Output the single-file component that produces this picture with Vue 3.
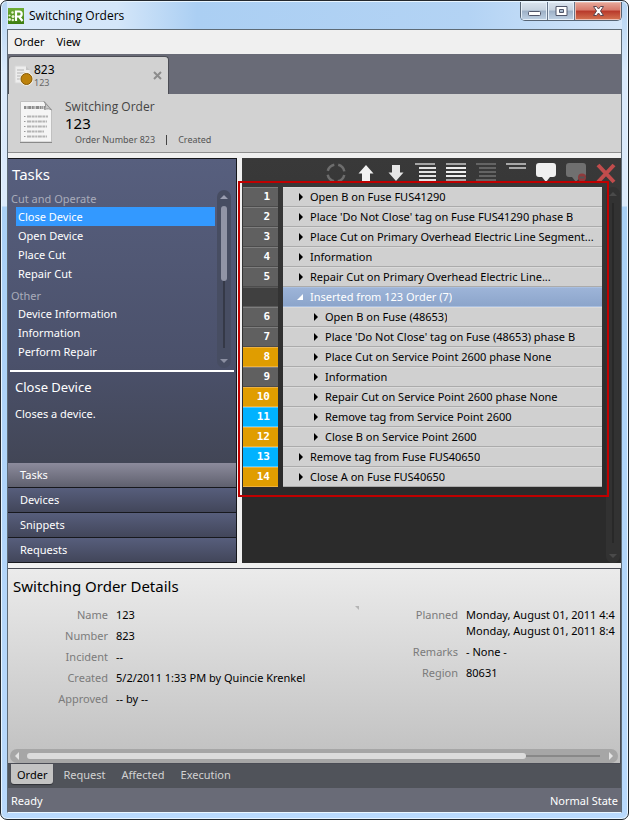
<script setup>
import { ref } from 'vue'

const taskGroups = [
  { name: 'Cut and Operate', items: ['Close Device', 'Open Device', 'Place Cut', 'Repair Cut'] },
  { name: 'Other', items: ['Device Information', 'Information', 'Perform Repair'] },
]
const selectedTask = ref('Close Device')

const sections = ['Tasks', 'Devices', 'Snippets', 'Requests']
const activeSection = ref('Tasks')

const steps = [
  { n: 1, text: 'Open B on Fuse FUS41290' },
  { n: 2, text: "Place 'Do Not Close' tag on Fuse FUS41290 phase B" },
  { n: 3, text: 'Place Cut on Primary Overhead Electric Line Segment...' },
  { n: 4, text: 'Information' },
  { n: 5, text: 'Repair Cut on Primary Overhead Electric Line...' },
  { n: '', text: 'Inserted from 123 Order (7)', group: true },
  { n: 6, text: 'Open B on Fuse (48653)', nested: true },
  { n: 7, text: "Place 'Do Not Close' tag on Fuse (48653) phase B", nested: true },
  { n: 8, text: 'Place Cut on Service Point 2600 phase None', nested: true, tone: 'amber' },
  { n: 9, text: 'Information', nested: true },
  { n: 10, text: 'Repair Cut on Service Point 2600 phase None', nested: true, tone: 'amber' },
  { n: 11, text: 'Remove tag from Service Point 2600', nested: true, tone: 'blue' },
  { n: 12, text: 'Close B on Service Point 2600', nested: true, tone: 'amber' },
  { n: 13, text: 'Remove tag from Fuse FUS40650', tone: 'blue' },
  { n: 14, text: 'Close A on Fuse FUS40650', tone: 'amber' },
]

const detailColumns = [
  [
    { label: 'Name', lines: ['123'] },
    { label: 'Number', lines: ['823'] },
    { label: 'Incident', lines: ['--'] },
    { label: 'Created', lines: ['5/2/2011 1:33 PM by Quincie Krenkel'] },
    { label: 'Approved', lines: ['-- by --'] },
  ],
  [
    { label: 'Planned', lines: ['Monday, August 01, 2011 4:4', 'Monday, August 01, 2011 8:4'] },
    { label: 'Remarks', lines: ['- None -'] },
    { label: 'Region', lines: ['80631'] },
  ],
]

const bottomTabs = ['Order', 'Request', 'Affected', 'Execution']
const activeTab = ref('Order')
</script>

<template>
  <div class="window">
    <header class="titlebar">
      <svg class="app-icon" viewBox="0 0 16 16" aria-hidden="true">
        <defs>
          <linearGradient id="appg" x1="0" y1="0" x2="0" y2="1">
            <stop offset="0" stop-color="#6fae35" /><stop offset="1" stop-color="#3d7d10" />
          </linearGradient>
        </defs>
        <rect width="16" height="16" fill="url(#appg)" />
        <path d="M8 13V3.5h3.2a2.4 2.4 0 0 1 0 5H8.5M11 8.5l3.500 4.5" fill="none" stroke="#fff" stroke-width="2.200" />
        <g fill="#e6f5cf">
          <circle cx="1.500" cy="7.500" r="1.100" /><circle cx="4.500" cy="4.500" r="1.200" /><circle cx="5" cy="8.4" r="1.500" />
          <circle cx="1.6" cy="11.5" r="1.400" /><circle cx="4.800" cy="12" r="1.300" />
        </g>
      </svg>
      <h1>Switching Orders</h1>
      <div class="caption-buttons">
        <button type="button" class="cap" aria-label="Minimize">
          <svg width="13" height="12" viewBox="0 0 13 12"><rect x="0.500" y="6.500" width="12" height="4" rx="1" fill="#fff" stroke="#50566a" /></svg>
        </button>
        <button type="button" class="cap" aria-label="Maximize">
          <svg width="13" height="12" viewBox="0 0 13 12"><path fill-rule="evenodd" d="M1 1.500h11v9H1zM4.500 4.500v3h4v-3z" fill="#fff" stroke="#50566a" /></svg>
        </button>
        <button type="button" class="cap cap-close" aria-label="Close">
          <svg width="13" height="12" viewBox="0 0 13 12"><path d="M1.500 1.500h3l2 2.500 2-2.500h3L8.500 6l3 4.500h-3l-2-2.500-2 2.500h-3l3-4.500z" fill="#fff" stroke="#5a4650" /></svg>
        </button>
      </div>
    </header>

    <div class="client">
      <nav class="menubar">
        <button type="button">Order</button>
        <button type="button">View</button>
      </nav>

      <div class="doc-tabs">
        <div class="doc-tab">
          <svg class="doc-icon" width="20" height="22" viewBox="0 0 20 22" aria-hidden="true">
            <path d="M1 1h11l4 4v13H1z" fill="#ededed" stroke="#d8d8d8" />
            <path d="M3 5h7M3 8h8M3 11h5M3 14h4" stroke="#b5b5b5" />
            <path d="M12 1v4h4z" fill="#c6c6c6" />
            <circle cx="12.500" cy="14" r="6.800" fill="#f8f1e0" />
            <circle cx="12.500" cy="14" r="5.500" fill="#bd820b" stroke="#865a08" />
          </svg>
          <span class="doc-names"><span>823</span><small>123</small></span>
          <button type="button" class="doc-close" aria-label="Close tab">
            <svg width="9" height="9" viewBox="0 0 9 9"><path d="M1 1l7 7M8 1L1 8" stroke="#8c8c8c" stroke-width="2" /></svg>
          </button>
        </div>
      </div>

      <section class="order-head">
        <svg width="34" height="44" viewBox="0 0 34 44" aria-hidden="true">
          <path d="M1.500 1.500h24l7 8v32.500h-31z" fill="#f5f5f5" stroke="#c0c0c0" />
          <path d="M1 42.500h32" stroke="#898989" />
          <path d="M5 7.500h21" stroke="#8a8a8a" stroke-width="3" stroke-dasharray="2 .6 1 .6 3 .6" />
          <path d="M25 1.500c2 2 2 5 .5 8 3-1 5-1 7 .5z" fill="#c8c8c8" stroke="#929292" />
          <path d="M8 16.500h21M8 21.500h20M8 26.500h20M8 31.500h17M8 36.500h20" stroke="#b4b4b4" stroke-width="2" stroke-dasharray="4 .6 3 .6 2 .6" />
          <path d="M5 16.500h1.500M5 21.500h1.500M5 26.500h1.500M5 31.500h1.500M5 36.500h1.500" stroke="#999" />
        </svg>
        <div class="order-text">
          <p class="kind">Switching Order</p>
          <h2>123</h2>
          <p class="meta"><span>Order Number 823</span><span class="bar"></span><span>Created</span></p>
        </div>
      </section>

      <main class="work">
        <aside class="side">
          <h2>Tasks</h2>
          <div class="task-area">
            <div class="task-list">
              <template v-for="g in taskGroups" :key="g.name">
                <h3>{{ g.name }}</h3>
                <button
                  v-for="t in g.items"
                  :key="t"
                  type="button"
                  :class="{ selected: t === selectedTask }"
                  @click="selectedTask = t"
                >{{ t }}</button>
              </template>
            </div>
            <div class="vscroll" aria-hidden="true">
              <svg width="8" height="4" viewBox="0 0 8 4"><path d="M0 4l4-4 4 4z" fill="#9b9eb0" /></svg>
              <div class="vtrack"><div class="vthumb"></div></div>
              <svg width="8" height="4" viewBox="0 0 8 4"><path d="M0 0l4 4 4-4z" fill="#8b8fa1" /></svg>
            </div>
          </div>
          <div class="task-info">
            <h3>Close Device</h3>
            <p>Closes a device.</p>
          </div>
          <nav class="sections">
            <button
              v-for="s in sections"
              :key="s"
              type="button"
              :class="{ active: s === activeSection }"
              @click="activeSection = s"
            >{{ s }}</button>
          </nav>
        </aside>

        <section class="steps">
          <div class="toolbar">
            <button type="button" aria-label="Refresh">
              <svg width="22" height="22" viewBox="0 0 22 22"><circle cx="11" cy="11" r="8.500" fill="none" stroke="#6d6d6d" stroke-width="2.500" stroke-dasharray="9.350 4" stroke-dashoffset="-2" /></svg>
            </button>
            <button type="button" aria-label="Move up">
              <svg width="22" height="22" viewBox="0 0 22 22"><path d="M11 3l7.500 8.500H15V19H7v-7.500H3.500z" fill="#f2f2f2" /></svg>
            </button>
            <button type="button" aria-label="Move down">
              <svg width="22" height="22" viewBox="0 0 22 22"><path d="M11 19l7.500-8.500H15V3H7v7.500H3.500z" fill="#e6e6e6" /></svg>
            </button>
            <button type="button" aria-label="Insert before">
              <svg width="22" height="22" viewBox="0 0 22 22"><path d="M0 2h20" stroke="#a5a5a5" stroke-width="2" /><path d="M4 6h17M4 10h17M4 14h17M4 18h17" stroke="#e4e4e4" stroke-width="2" /></svg>
            </button>
            <button type="button" aria-label="Show all">
              <svg width="22" height="22" viewBox="0 0 22 22"><path d="M1 2h20M1 18h20" stroke="#a5a5a5" stroke-width="2" /><path d="M1 6h20M1 10h20M1 14h20" stroke="#eee" stroke-width="2" /></svg>
            </button>
            <button type="button" aria-label="Indent">
              <svg width="22" height="22" viewBox="0 0 22 22"><path d="M1 2h20M4 6h17M4 10h17M4 14h17M1 18h20" stroke="#646464" stroke-width="2" /></svg>
            </button>
            <button type="button" aria-label="Collapse">
              <svg width="22" height="22" viewBox="0 0 22 22"><path d="M1 2h20M4 6h17" stroke="#a8a8a8" stroke-width="2" /></svg>
            </button>
            <button type="button" aria-label="Add comment">
              <svg width="22" height="22" viewBox="0 0 22 22"><path d="M4 1h14q3 0 3 3v8q0 3-3 3h-3l-4 5-4-5H4q-3 0-3-3V4q0-3 3-3z" fill="#f0f0f0" /></svg>
            </button>
            <button type="button" aria-label="Remove comment">
              <svg width="22" height="22" viewBox="0 0 22 22"><path d="M4 1h14q3 0 3 3v8q0 3-3 3h-3l-4 5-4-5H4q-3 0-3-3V4q0-3 3-3z" fill="#707070" /><circle cx="17" cy="15.500" r="4" fill="#8f3a3c" /><path d="M14.500 15.500h5" stroke="#555" stroke-width="2" /></svg>
            </button>
            <button type="button" aria-label="Delete">
              <svg width="22" height="22" viewBox="0 0 22 22"><path d="M3 3l16 17M19 3L3 20" stroke="#c14c4c" stroke-width="4" /></svg>
            </button>
          </div>

          <div class="step-body">
            <div class="step-column">
              <ol class="step-list">
                <li v-for="(s, i) in steps" :key="i" :class="[s.tone, { group: s.group, nested: s.nested }]">
                  <span class="num">{{ s.n }}</span>
                  <span class="step">
                    <svg v-if="s.group" width="6" height="6" viewBox="0 0 6 6" aria-hidden="true"><path d="M6 0v6H0z" fill="#fff" /></svg>
                    <svg v-else width="6" height="8" viewBox="0 0 6 8" aria-hidden="true"><path d="M1 0l4 4-4 4z" fill="#000" /></svg>
                    <span class="step-text">{{ s.text }}</span>
                  </span>
                </li>
              </ol>
              <div class="highlight"></div>
            </div>
            <div class="vscroll dark" aria-hidden="true">
              <svg width="8" height="4" viewBox="0 0 8 4"><path d="M0 4l4-4 4 4z" fill="#4a4a4a" /></svg>
              <div class="vtrack"></div>
              <svg width="8" height="4" viewBox="0 0 8 4"><path d="M0 0l4 4 4-4z" fill="#4a4a4a" /></svg>
            </div>
          </div>
        </section>
      </main>

      <section class="details">
        <h2>Switching Order Details</h2>
        <div class="detail-columns">
          <dl v-for="(col, c) in detailColumns" :key="c">
            <div v-for="f in col" :key="f.label" class="field">
              <dt>{{ f.label }}</dt>
              <dd><span v-for="l in f.lines" :key="l">{{ l }}</span></dd>
            </div>
          </dl>
          <svg class="corner" width="4" height="4" viewBox="0 0 4 4" aria-hidden="true"><path d="M0 0h4v4z" fill="#b4b4b4" /></svg>
        </div>
        <div class="hscroll" aria-hidden="true">
          <svg width="4" height="8" viewBox="0 0 4 8"><path d="M4 0L0 4l4 4z" fill="#e4e4e4" /></svg>
          <div class="htrack"><div class="hthumb"></div></div>
          <svg width="4" height="8" viewBox="0 0 4 8"><path d="M0 0l4 4-4 4z" fill="#e4e4e4" /></svg>
        </div>
      </section>

      <nav class="bottom-tabs">
        <button
          v-for="t in bottomTabs"
          :key="t"
          type="button"
          :class="{ active: t === activeTab }"
          @click="activeTab = t"
        >{{ t }}</button>
      </nav>

      <footer class="status"><span>Ready</span><span>Normal State</span></footer>
    </div>
  </div>
</template>

<style>
body {
  margin: 0;
  background: #fff;
}
</style>

<style scoped>
* {
  box-sizing: border-box;
}
h1, h2, h3, p, ol, dl, dd {
  margin: 0;
  padding: 0;
  font-weight: 400;
}
button {
  margin: 0;
  padding: 0;
  border: 0;
  background: none;
  font: inherit;
  color: inherit;
  text-align: left;
}
svg {
  display: block;
  flex: none;
}
.window {
  display: flex;
  flex-direction: column;
  min-height: 100vh;
  padding: 0 6px 6px;
  border: 1px solid #23282e;
  border-radius: 7px;
  background: linear-gradient(180deg, #b4d3f2 0, #d9e9fb 70px, #dceafa 205px, #a9d0f5 206px, #b9d9fc 100%);
  box-shadow: inset 0 0 0 1px #e8f5ff;
  font-family: "Noto Sans", "Open Sans", sans-serif;
  font-size: 11px;
  line-height: 16px;
  color: #000;
}
.titlebar {
  display: flex;
  align-items: center;
  height: 27px;
  gap: 5px;
  padding-left: 1px;
  background: linear-gradient(90deg, #d9e9fa 0, #d4e6f9 110px, #abcff3 190px, #b3d3f4 75%, #d4e6fa 100%);
  margin-top: 1px;
}
.app-icon {
  width: 16px;
  height: 16px;
}
.titlebar h1 {
  flex: 1;
  font-family: "Open Sans", sans-serif;
  font-size: 12px;
}
.caption-buttons {
  display: flex;
  align-self: flex-start;
  height: 19px;
  border: 1px solid #566474;
  border-top: 0;
  border-radius: 0 0 5px 5px;
  overflow: hidden;
}
.cap {
  display: flex;
  justify-content: center;
  align-items: center;
  width: 27px;
  border-right: 1px solid #66758a;
  background: linear-gradient(#dbe4ee 0, #c6d2df 45%, #9db0c6 50%, #c0d2e5 100%);
  box-shadow: inset 0 0 0 1px #e6eff8;
}
.cap-close {
  width: 46px;
  border-right: 0;
  background: linear-gradient(#e7aa9c 0, #d7796a 45%, #b8382a 50%, #d57552 100%);
  box-shadow: inset 0 0 0 1px #edbcaf;
}
.client {
  display: flex;
  flex-direction: column;
  flex: 1;
  min-width: 0;
  border: 1px solid #5e6b76;
  border-bottom-color: #e8f5ff;
  background: #f0f0f0;
}
.menubar {
  display: flex;
  gap: 12px;
  height: 24px;
  padding: 0 6px;
}
.doc-tabs {
  display: flex;
  align-items: flex-end;
  height: 40px;
  background: #696b77;
}
.doc-tab {
  display: flex;
  align-items: center;
  width: 161px;
  height: 38px;
  padding: 0 6px 0 5px;
  border: 1px solid #4c4d55;
  border-bottom: 0;
  border-radius: 4px 4px 0 0;
  background: #d2d2d2;
}
.doc-names {
  display: flex;
  flex: 1;
  flex-direction: column;
  font-size: 12px;
  line-height: 14px;
}
.doc-names small {
  font-size: 9px;
  line-height: 11px;
  color: #666;
}
.order-head {
  display: flex;
  gap: 12px;
  height: 59px;
  padding: 6px 11px 0;
  border-bottom: 1px solid #8e8e8e;
  background: #d2d2d2;
}
.order-text .kind {
  font-family: "Open Sans", sans-serif;
  font-size: 12px;
  line-height: 14px;
  color: #444;
}
.order-text h2 {
  font-size: 15px;
  line-height: 19px;
}
.order-text .meta {
  display: flex;
  align-items: center;
  gap: 11px;
  padding-left: 10px;
  font-size: 9px;
  line-height: 14px;
  color: #555;
}
.meta .bar {
  width: 1px;
  height: 10px;
  background: #444;
}
.work {
  display: flex;
  flex: 1;
  gap: 5px;
  padding: 5px 0;
}
.side {
  display: flex;
  flex-direction: column;
  width: 229px;
  border: 1px solid #15161a;
  border-left: 0;
  border-bottom: 0;
  background: linear-gradient(#575f7e 0, #4b516b 50%, #424656 75%, #424656 100%);
  color: #fff;
}
.side h2 {
  height: 31px;
  padding: 5px 4px 0;
  font-size: 15px;
  line-height: 20px;
}
.task-area {
  display: flex;
  gap: 2px;
  height: 178px;
  padding-right: 5px;
}
.task-list {
  display: flex;
  flex: 1;
  flex-direction: column;
}
.task-list h3 {
  padding: 4px 3px 0;
  font-size: 11px;
  line-height: 17px;
  color: #a9acba;
}
.task-list h3:first-child {
  padding-top: 0;
}
.task-list button {
  height: 19px;
  margin-left: 8px;
  padding: 0 2px;
}
.task-list .selected {
  background: #3399ff;
}
.vscroll {
  display: flex;
  flex-direction: column;
  align-items: center;
  gap: 7px;
  width: 14px;
  padding: 5px 0;
  border-radius: 7px;
  background: #474d62;
}
.vtrack {
  display: flex;
  flex: 1;
  justify-content: center;
  width: 6px;
  margin-bottom: 4px;
  background: linear-gradient(90deg, transparent 2px, #353947 2px, #353947 4px, transparent 4px);
}
.vthumb {
  width: 6px;
  height: 75px;
  border-radius: 3px;
  background: #9194a6;
}
.vscroll.dark {
  background: #323232;
}
.dark .vtrack {
  background: linear-gradient(90deg, transparent 2px, #282828 2px, #282828 4px, transparent 4px);
}
.task-info {
  flex: 1;
  margin: 2px 2px 0;
  padding: 5px;
  border-top: 2px solid #fff;
}
.task-info h3 {
  font-size: 13px;
  line-height: 20px;
}
.task-info p {
  padding-top: 9px;
}
.sections {
  display: flex;
  flex-direction: column;
}
.sections button {
  height: 25px;
  padding: 0 12px;
  border-bottom: 1px solid #17181d;
  background: linear-gradient(#575e7c, #42465a);
}
.sections .active {
  background: linear-gradient(#8c8b9c, #5f606e);
}
.steps {
  display: flex;
  flex: 1;
  flex-direction: column;
  min-width: 0;
  background: linear-gradient(#393939, #2b2b2b 320px);
}
.toolbar {
  display: flex;
  justify-content: flex-end;
  gap: 8px;
  height: 29px;
  padding: 1px 4px 0;
}
.step-body {
  display: flex;
  flex: 1;
  gap: 4px;
  padding: 0 1px;
}
.step-column {
  position: relative;
  flex: 1;
  min-width: 0;
  align-self: flex-start;
}
.highlight {
  position: absolute;
  inset: -6px -7px -10px -5px;
  border: 2px solid #c00000;
  pointer-events: none;
}
.step-list {
  list-style: none;
}
.step-list li {
  display: flex;
  gap: 5px;
  height: 20px;
}
.num {
  width: 35px;
  padding-right: 8px;
  border-top: 1px solid #7d7d7d;
  border-bottom: 1px solid #4c4c4c;
  background: #606060;
  font: bold 11px/18px "DejaVu Sans Mono", monospace;
  text-align: right;
  color: #fff;
}
.amber .num {
  border-color: #efb23c #b57e00;
  background: #e09d00;
}
.blue .num {
  border-color: #4fcbff #0092cc;
  background: #00b2ff;
}
.group .num {
  border-color: #5a5a5a #303030;
  background: #404040;
}
.step {
  display: flex;
  flex: 1;
  align-items: center;
  gap: 6px;
  min-width: 0;
  padding-left: 15px;
  border-top: 1px solid #dadada;
  border-bottom: 1px solid #ababab;
  background: #d0d0d0;
}
.step-text {
  overflow: hidden;
  white-space: nowrap;
}
.nested .step {
  padding-left: 30px;
}
.group .step {
  padding-left: 14px;
  gap: 7px;
  border-color: #a9bfe0 #8299c0;
  background: linear-gradient(#9db4d8, #8ca5cb);
  color: #fff;
}
.details {
  border: 1px solid #4a4c55;
  border-left: 0;
  background: linear-gradient(#ebebeb, #c0c0c0);
  overflow: hidden;
}
.details h2 {
  padding: 6px 5px 0;
  font-size: 15px;
  line-height: 22px;
}
.detail-columns {
  position: relative;
  display: flex;
  height: 152px;
  padding-top: 10px;
}
dl {
  display: flex;
  flex: 0 0 350px;
  flex-direction: column;
  gap: 5px;
}
.field {
  display: flex;
  gap: 8px;
}
dt {
  width: 100px;
  text-align: right;
  color: #7b7b7b;
}
dd {
  display: flex;
  flex-direction: column;
  white-space: nowrap;
}
.corner {
  position: absolute;
  left: 347px;
  top: 9px;
}
.hscroll {
  display: flex;
  align-items: center;
  gap: 8px;
  height: 14px;
  margin: 0 2px;
  padding: 0 5px;
  border-radius: 7px;
  background: #a6a6a6;
}
.htrack {
  flex: 1;
  height: 6px;
  margin-right: 1px;
  background: linear-gradient(transparent 2px, #888 2px, #888 4px, transparent 4px);
}
.hthumb {
  width: 87%;
  height: 6px;
  border-radius: 3px;
  background: #dcdcdc;
}
.bottom-tabs {
  display: flex;
  align-items: flex-start;
  gap: 4px;
  height: 24px;
  padding: 0 3px;
  background: #50535a;
  color: #d2d2d2;
}
.bottom-tabs button {
  height: 20px;
  padding: 2px 6px 0;
}
.bottom-tabs .active {
  background: #c3c3c3;
  border-radius: 0 0 3px 3px;
  box-shadow: 0 1px 1px #2e3036;
  color: #000;
}
.status {
  display: flex;
  justify-content: space-between;
  align-items: center;
  height: 24px;
  padding: 2px 3px 0;
  background: #696b77;
  color: #fff;
}
</style>
